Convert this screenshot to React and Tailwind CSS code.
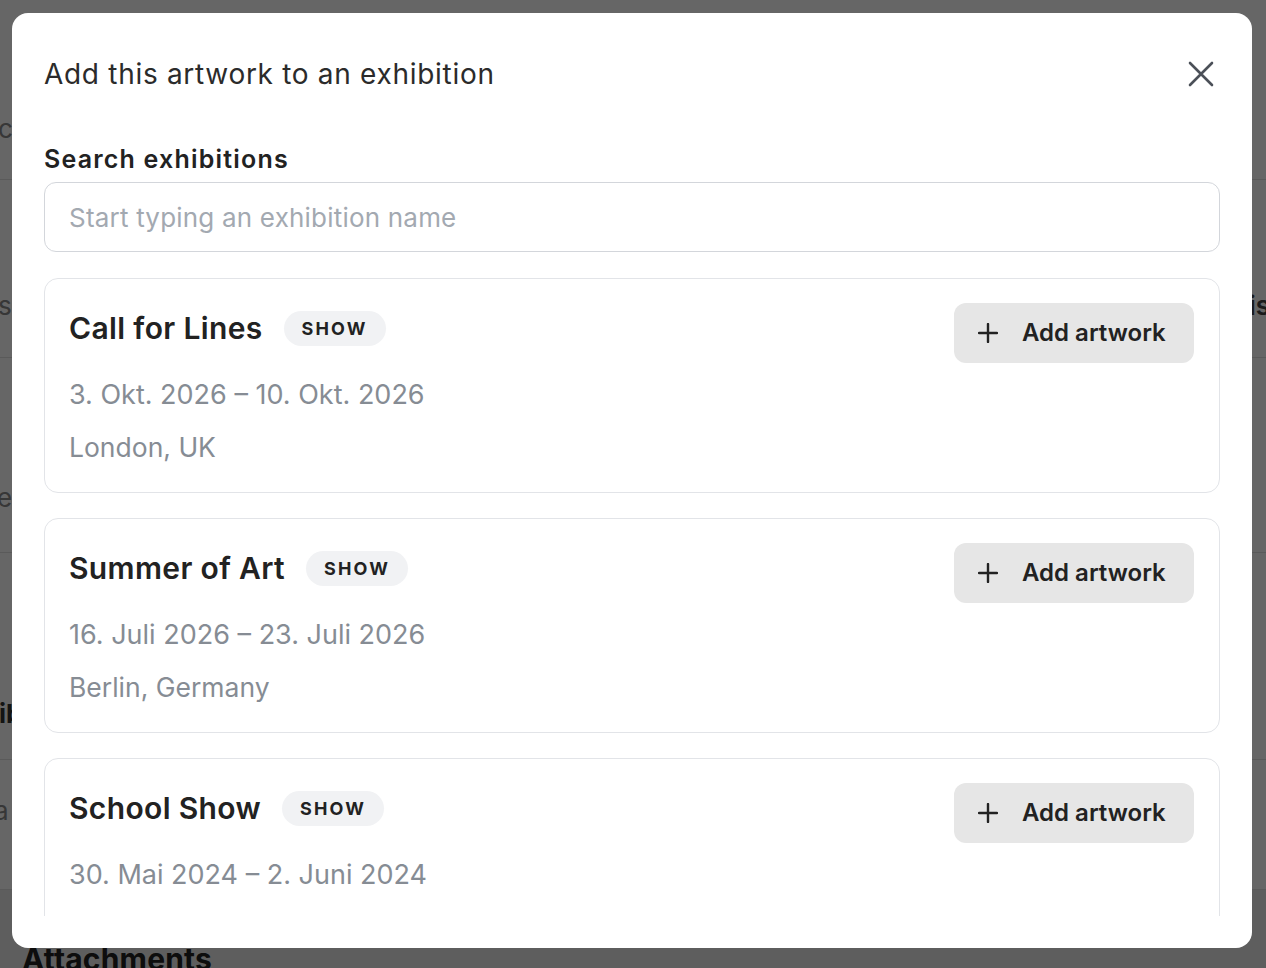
import React from 'react';

const exhibitions = [
  { title: 'Call for Lines', dates: '3. Okt. 2026 – 10. Okt. 2026', place: 'London, UK' },
  { title: 'Summer of Art', dates: '16. Juli 2026 – 23. Juli 2026', place: 'Berlin, Germany' },
  { title: 'School Show', dates: '30. Mai 2024 – 2. Juni 2024', place: '' },
];

const CloseIcon = () => (
  <svg width="26" height="26" viewBox="0 0 26 26" fill="none">
    <path d="M2 2L24 24M24 2L2 24" stroke="#4b5058" strokeWidth="2.6" strokeLinecap="round" />
  </svg>
);

const PlusIcon = () => (
  <svg width="20" height="20" viewBox="0 0 20 20" fill="none">
    <path d="M10 1V19M1 10H19" stroke="#222" strokeWidth="2.4" strokeLinecap="round" />
  </svg>
);

const ExhibitionCard = ({ item }) => {
  return (
    <div className="flex shrink-0 justify-between rounded-[14px] border border-[#e2e4e8] bg-white pl-6 pr-[25px] pt-6 pb-[25px]">
      <div className="flex flex-col">
        <div className="flex h-[50px] items-center gap-[21px]">
          <span className="text-[30px] font-semibold leading-none tracking-[0.35px] text-[#222]">{item.title}</span>
          <span className="flex h-[35px] items-center rounded-full bg-[#f1f2f4] px-[18px] text-[18px] font-bold tracking-[0.12em] text-[#222]">
            SHOW
          </span>
        </div>
        <div className="mt-[22px] text-[27px] leading-[40px] text-[#868c94]">{item.dates}</div>
        <div className="mt-[12px] h-[40px] text-[26.5px] leading-[40px] text-[#868c94]">{item.place}</div>
      </div>
      <button className="flex h-[60px] w-[240px] items-center gap-6 rounded-xl bg-[#e6e6e6] pl-6">
        <PlusIcon />
        <span className="text-[24px] font-semibold text-[#222]">Add artwork</span>
      </button>
    </div>
  );
};

const BackgroundPage = () => {
  return (
    <div className="flex h-[968px] flex-col overflow-hidden bg-white text-[26px] text-[#8a8a8a]">
      <div className="flex h-[180px] items-end justify-between border-b border-[#e0e0e0] pb-[31px]">
        <span className="-ml-[2px]">c</span>
      </div>
      <div className="flex h-[178px] items-end justify-between border-b border-[#e0e0e0] pb-[32px]">
        <span className="-ml-[2px]">s</span>
        <span className="-mr-[4px] font-semibold text-[#444]">is</span>
      </div>
      <div className="flex h-[195px] items-end border-b border-[#e0e0e0] pb-[35px]">
        <span className="-ml-[3px]">e</span>
      </div>
      <div className="flex h-[207px] items-end border-b border-[#e0e0e0] pb-[26px]">
        <span className="-ml-[1px] font-bold text-[#333]">ib</span>
      </div>
      <div className="flex h-[130px] items-start border-b border-[#e0e0e0] pt-[31px]">
        <span className="-ml-[6px]">a</span>
      </div>
      <div className="flex flex-1 items-end bg-[#ececec] pl-[22px]">
        <span className="-mb-[14px] text-[30px] font-bold tracking-[0.2px] text-[#222]">Attachments</span>
      </div>
    </div>
  );
};

export default function App() {
  return (
    <div className="relative h-[968px] w-full overflow-hidden" style={{ fontFamily: 'Inter, "Noto Sans", sans-serif' }}>
      <BackgroundPage />
      <div className="absolute inset-0 bg-black/60" />
      <div className="absolute left-[12px] top-[13px] flex h-[935px] w-[1240px] flex-col rounded-2xl bg-white px-8 pt-[42px] pb-8">
        <div className="flex h-[38px] items-center justify-between">
          <h2 className="text-[28px] leading-[38px] tracking-[0.7px] text-[#2b2b2b]">Add this artwork to an exhibition</h2>
          <button className="mr-[6px]">
            <CloseIcon />
          </button>
        </div>
        <label className="mt-[50px] text-[25px] font-semibold leading-[32px] tracking-[1.2px] text-[#222]">Search exhibitions</label>
        <input
          className="mt-[7px] h-[70px] shrink-0 rounded-xl border border-[#d3d6db] px-6 text-[26px] tracking-[0.2px] text-[#222] outline-none placeholder:text-[#a3a9b1]"
          placeholder="Start typing an exhibition name"
        />
        <div className="mt-[26px] flex min-h-0 flex-1 flex-col gap-[25px] overflow-hidden">
          {exhibitions.map((item) => (
            <ExhibitionCard key={item.title} item={item} />
          ))}
        </div>
      </div>
    </div>
  );
}
